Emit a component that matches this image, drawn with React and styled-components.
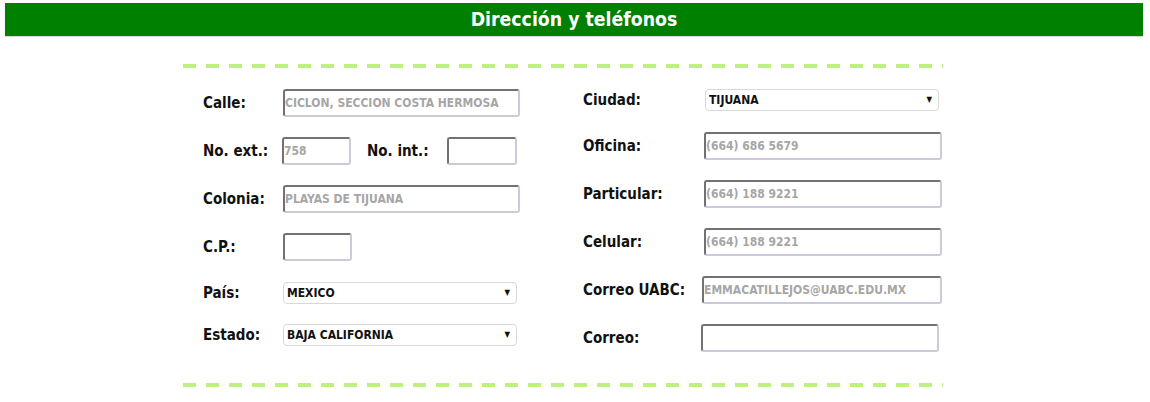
import React from "react";
import styled, { createGlobalStyle } from "styled-components";

const Global = createGlobalStyle`
  html, body { margin: 0; padding: 0; background: #fff; }
  body { font-family: "DejaVu Sans Condensed", "DejaVu Sans", sans-serif; }
`;

const Page = styled.div`
  width: 1150px;
  padding-top: 3px;
`;

const Header = styled.h2`
  margin: 0 7px 0 5px;
  height: 33px;
  background: #008000;
  color: #fff;
  font-size: 19.3px;
  font-weight: bold;
  line-height: 33px;
  text-align: center;
  box-shadow: 0 1px 1px rgba(0,0,0,0.15);
`;

const Panel = styled.section`
  width: 760px;
  margin: 28px 0 0 183px;
`;

const Dashes = styled.div`
  height: 4px;
  background: repeating-linear-gradient(
    to right,
    #bdf07c 0 13px,
    transparent 13px 23px
  );
`;

const Columns = styled.div`
  display: flex;
  padding: 9px 0 21px 20px;
`;

const Column = styled.div`
  display: flex;
  flex-direction: column;
  width: ${(p) => p.$w}px;
  margin-top: ${(p) => p.$top || 0}px;
`;

const Row = styled.div`
  display: flex;
  align-items: center;
  height: ${(p) => p.$h}px;
`;

const Label = styled.label`
  flex: none;
  width: ${(p) => p.$w}px;
  font-size: 15px;
  font-weight: bold;
  color: #111;
`;

const TextInput = styled.input`
  box-sizing: border-box;
  width: ${(p) => p.$w}px;
  height: 28px;
  margin-left: ${(p) => p.$shift || 0}px;
  padding: 0;
  border: 2px solid;
  border-color: #727272 #cacada #cacada #727272;
  border-radius: 3px;
  background: #fff;
  font-family: "DejaVu Sans Condensed", "DejaVu Sans", sans-serif;
  font-size: 12px;
  font-weight: bold;
  color: #a6a6a6;
  outline: none;
`;

const SelectWrap = styled.div`
  position: relative;
  width: ${(p) => p.$w}px;
  height: 22px;
  margin-left: ${(p) => p.$shift || 0}px;
`;

const Select = styled.select`
  appearance: none;
  box-sizing: border-box;
  width: 100%;
  height: 100%;
  padding: 0 20px 0 3px;
  border: 1px solid #d8d8d8;
  border-radius: 4px;
  background: #fff;
  font-family: "DejaVu Sans Condensed", "DejaVu Sans", sans-serif;
  font-size: 12px;
  font-weight: bold;
  color: #111;
  outline: none;
`;

const Arrow = styled.span`
  position: absolute;
  right: 7px;
  top: 50%;
  transform: translateY(-50%);
  font-size: 8px;
  line-height: 1;
  color: #111;
  pointer-events: none;
`;

const Gap = styled.span`
  display: inline-block;
  width: ${(p) => p.$w}px;
`;

function Field({ value, w, shift }) {
  return <TextInput readOnly $w={w} $shift={shift} value={value} />;
}

function Drop({ value, w, shift }) {
  return (
    <SelectWrap $w={w} $shift={shift}>
      <Select value={value} onChange={() => {}}>
        <option>{value}</option>
      </Select>
      <Arrow>▼</Arrow>
    </SelectWrap>
  );
}

export default function App() {
  return (
    <Page>
      <Global />
      <Header>Dirección y teléfonos</Header>
      <Panel>
        <Dashes />
        <Columns>
          <Column $w={380} $top={1}>
            <Row $h={49}>
              <Label $w={80}>Calle:</Label>
              <Field w={237} value="CICLON, SECCION COSTA HERMOSA" />
            </Row>
            <Row $h={48}>
              <Label $w={79}>No. ext.:</Label>
              <Field w={69} value="758" />
              <Gap $w={16} />
              <Label $w={80}>No. int.:</Label>
              <Field w={70} value="" />
            </Row>
            <Row $h={48}>
              <Label $w={80}>Colonia:</Label>
              <Field w={237} value="PLAYAS DE TIJUANA" />
            </Row>
            <Row $h={48}>
              <Label $w={80}>C.P.:</Label>
              <Field w={69} value="" />
            </Row>
            <Row $h={44}>
              <Label $w={80}>País:</Label>
              <Drop w={234} value="MEXICO" />
            </Row>
            <Row $h={40}>
              <Label $w={80}>Estado:</Label>
              <Drop w={234} value="BAJA CALIFORNIA" />
            </Row>
          </Column>
          <Column $w={360}>
            <Row $h={45}>
              <Label $w={121}>Ciudad:</Label>
              <Drop w={234} shift={1} value="TIJUANA" />
            </Row>
            <Row $h={48}>
              <Label $w={121}>Oficina:</Label>
              <Field w={238} value="(664) 686 5679" />
            </Row>
            <Row $h={48}>
              <Label $w={121}>Particular:</Label>
              <Field w={238} value="(664) 188 9221" />
            </Row>
            <Row $h={48}>
              <Label $w={121}>Celular:</Label>
              <Field w={238} value="(664) 188 9221" />
            </Row>
            <Row $h={48}>
              <Label $w={119}>Correo UABC:</Label>
              <Field w={240} value="EMMACATILLEJOS@UABC.EDU.MX" />
            </Row>
            <Row $h={48}>
              <Label $w={118}>Correo:</Label>
              <Field w={238} value="" />
            </Row>
          </Column>
        </Columns>
        <Dashes />
      </Panel>
    </Page>
  );
}
